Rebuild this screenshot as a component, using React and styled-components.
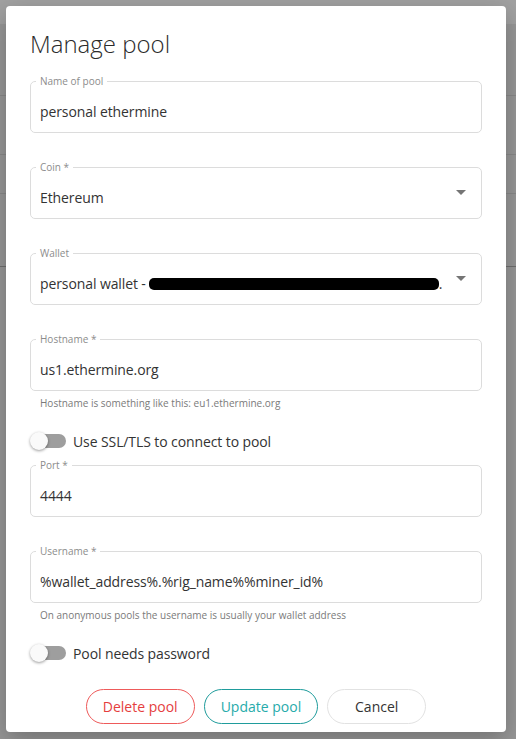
import styled, { createGlobalStyle } from "styled-components";

const GlobalStyle = createGlobalStyle`
  body {
    margin: 0;
    font-family: "Open Sans", "Noto Sans", sans-serif;
  }
`;

const Screen = styled.div`
  position: relative;
  width: 516px;
  height: 739px;
  overflow: hidden;
  background: #f0f0f0;
`;

const PageHeader = styled.div`
  height: 24px;
  background: #ffffff;
`;

const PageRow = styled.div`
  height: ${(p) => p.$h}px;
  border-bottom: 1px solid ${(p) => (p.$dark ? "#b0b0b0" : "#dadada")};
`;

const Overlay = styled.div`
  position: absolute;
  inset: 0;
  background: rgba(0, 0, 0, 0.37);
  display: flex;
  align-items: flex-start;
  padding: 6px 10px 0 6px;
`;

const Dialog = styled.div`
  width: 500px;
  height: 726px;
  box-sizing: border-box;
  background: #fff;
  border-radius: 4px;
  box-shadow: 0 8px 24px rgba(0, 0, 0, 0.25);
  padding: 22px 24px 8px;
  display: flex;
  flex-direction: column;
  color: #333;
`;

const Title = styled.h2`
  margin: 0 0 15px;
  font-size: 24px;
  line-height: 32px;
  font-weight: 300;
  color: #2b2b2b;
`;

const FieldBox = styled.fieldset`
  margin: 0 0 ${(p) => p.$mb}px;
  padding: 0 10px 0 9px;
  border: 1px solid #dcdcdc;
  border-radius: 5px;
  min-width: 0;
`;

const Legend = styled.legend`
  margin-left: -4px;
  padding: 0 4px;
  font-size: 10px;
  line-height: 12px;
  color: #8c8c8c;
`;

const Value = styled.div`
  height: 45px;
  box-sizing: border-box;
  padding-top: 3px;
  display: flex;
  align-items: center;
  justify-content: space-between;
  font-size: 14px;
  letter-spacing: -0.1px;
  color: #333;
  white-space: nowrap;
`;

const Caret = styled.span`
  width: 0;
  height: 0;
  margin-right: 5px;
  margin-top: -9px;
  border-left: 5px solid transparent;
  border-right: 5px solid transparent;
  border-top: 5px solid #757575;
`;

const Redacted = styled.span`
  display: inline-block;
  width: 290px;
  height: 12px;
  margin-left: 3px;
  vertical-align: -1px;
  background: #000;
  border-radius: 5px;
`;

const Helper = styled.div`
  margin: 5px 0 ${(p) => p.$mb}px 10px;
  font-size: 10px;
  line-height: 14px;
  color: #7a7a7a;
`;

const SwitchRow = styled.label`
  height: 24px;
  margin-bottom: ${(p) => p.$mb}px;
  display: flex;
  align-items: center;
  gap: 7px;
  font-size: 14px;
  letter-spacing: -0.1px;
  color: #333;
`;

const Toggle = styled.span`
  position: relative;
  width: 36px;
  height: 24px;
  flex: none;
`;

const Track = styled.span`
  position: absolute;
  left: 4px;
  top: 5px;
  width: 32px;
  height: 14px;
  border-radius: 7px;
  background: #9e9e9e;
`;

const Thumb = styled.span`
  position: absolute;
  left: 0;
  top: 3px;
  width: 18px;
  height: 18px;
  border-radius: 50%;
  background: #fafafa;
  box-shadow: 0 1px 3px rgba(0, 0, 0, 0.4);
`;

const Actions = styled.div`
  display: flex;
  justify-content: center;
  gap: 9px;
  margin-top: 24px;
`;

const Button = styled.button`
  height: 35px;
  min-width: 99px;
  padding: 0 16px;
  border-radius: 18px;
  background: #fff;
  border: 1px solid ${(p) => p.$border};
  color: ${(p) => p.$color};
  font-family: inherit;
  font-size: 14px;
  font-weight: 500;
  cursor: pointer;
`;

const Field = ({ label, children, select, mb = 28 }) => (
  <FieldBox $mb={mb}>
    <Legend>{label}</Legend>
    <Value>
      <span>{children}</span>
      {select && <Caret />}
    </Value>
  </FieldBox>
);

const Switch = ({ label, mb }) => (
  <SwitchRow $mb={mb}>
    <Toggle>
      <Track />
      <Thumb />
    </Toggle>
    {label}
  </SwitchRow>
);

export default function App() {
  return (
    <Screen>
      <GlobalStyle />
      <PageHeader />
      <PageRow $h={71} />
      <PageRow $h={58} />
      <PageRow $h={38} />
      <PageRow $h={72} $dark />
      <Overlay>
        <Dialog>
          <Title>Manage pool</Title>
          <Field label="Name of pool">personal ethermine</Field>
          <Field label="Coin *" select>
            Ethereum
          </Field>
          <Field label="Wallet" select>
            personal wallet -<Redacted />.
          </Field>
          <Field label="Hostname *" mb={0}>
            us1.ethermine.org
          </Field>
          <Helper $mb={19}>Hostname is something like this: eu1.ethermine.org</Helper>
          <Switch label="Use SSL/TLS to connect to pool" mb={6} />
          <Field label="Port *">4444</Field>
          <Field label="Username *" mb={0}>
            %wallet_address%.%rig_name%%miner_id%
          </Field>
          <Helper $mb={19}>On anonymous pools the username is usually your wallet address</Helper>
          <Switch label="Pool needs password" mb={0} />
          <Actions>
            <Button $border="#ee5a5a" $color="#e53e3e">
              Delete pool
            </Button>
            <Button $border="#1f9c9c" $color="#27abab">
              Update pool
            </Button>
            <Button $border="#e2e2e2" $color="#333">
              Cancel
            </Button>
          </Actions>
        </Dialog>
      </Overlay>
    </Screen>
  );
}
